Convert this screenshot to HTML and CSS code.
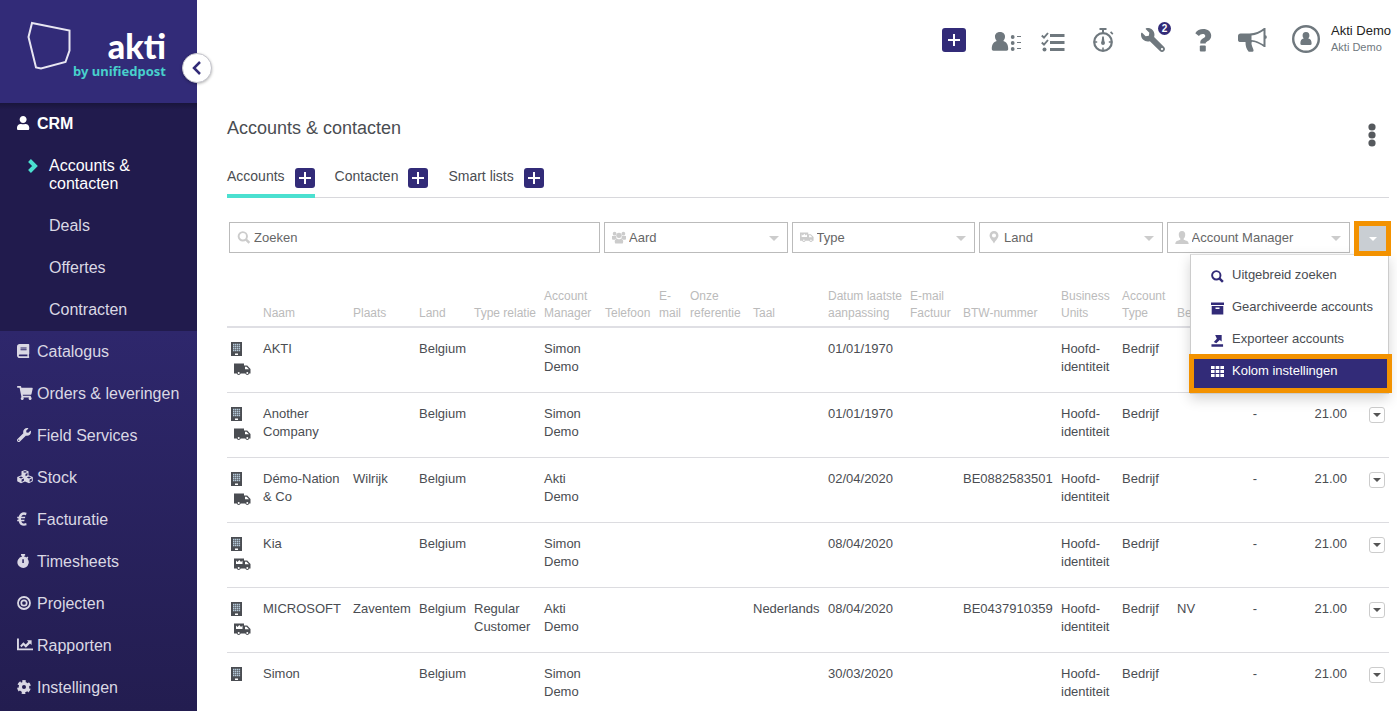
FILE: index.html
```html
<!DOCTYPE html>
<html lang="nl">
<head>
    <meta charset="UTF-8">
    <meta name="viewport" content="width=device-width, initial-scale=1.0">
    <title>Accounts &amp; contacten</title>
    <link rel="stylesheet" href="styles.css">
</head>
<body>

    <svg class="sprite" aria-hidden="true">
        <symbol id="i-user" viewBox="0 0 448 512" preserveAspectRatio="xMinYMid"><path d="M224 256c70.700 0 128-57.300 128-128S294.700 0 224 0 96 57.300 96 128s57.300 128 128 128zm89.600 32h-16.700c-22.200 10.200-46.900 16-72.900 16s-50.600-5.800-72.900-16h-16.700C60.200 288 0 348.200 0 422.400V464c0 26.500 21.500 48 48 48h352c26.500 0 48-21.500 48-48v-41.600c0-74.200-60.200-134.400-134.400-134.400z"/></symbol>
        <symbol id="i-book" viewBox="0 0 448 512" preserveAspectRatio="xMinYMid"><path d="M448 360V24c0-13.300-10.700-24-24-24H96C43 0 0 43 0 96v320c0 53 43 96 96 96h328c13.300 0 24-10.700 24-24v-16c0-7.500-3.500-14.300-8.900-18.700-4.200-15.400-4.200-59.300 0-74.700 5.400-4.300 8.900-11.100 8.900-18.600zM128 134c0-3.300 2.700-6 6-6h212c3.300 0 6 2.700 6 6v20c0 3.300-2.700 6-6 6H134c-3.300 0-6-2.700-6-6v-20zm0 64c0-3.300 2.700-6 6-6h212c3.300 0 6 2.700 6 6v20c0 3.300-2.700 6-6 6H134c-3.300 0-6-2.700-6-6v-20zm253.400 250H96c-17.700 0-32-14.300-32-32 0-17.600 14.400-32 32-32h285.400c-1.900 17.100-1.900 46.900 0 64z"/></symbol>
        <symbol id="i-cart" viewBox="0 0 576 512" preserveAspectRatio="xMinYMid"><path d="M528.120 301.319l47.273-208C578.806 78.301 567.391 64 551.990 64H159.208l-9.166-44.810C147.758 8.021 137.930 0 126.529 0H24C10.745 0 0 10.745 0 24v16c0 13.255 10.745 24 24 24h69.883l70.248 343.435C147.325 417.100 136 435.222 136 456c0 30.928 25.072 56 56 56s56-25.072 56-56c0-15.674-6.447-29.835-16.824-40h209.647C430.447 426.165 424 440.326 424 456c0 30.928 25.072 56 56 56s56-25.072 56-56c0-22.172-12.888-41.332-31.579-50.405l5.517-24.276c3.413-15.018-8.002-29.319-23.403-29.319H218.117l-6.545-32h293.145c11.206 0 20.920-7.754 23.403-18.681z"/></symbol>
        <symbol id="i-wrench" viewBox="0 0 512 512" preserveAspectRatio="xMinYMid"><path d="M507.730 109.100c-2.240-9.030-13.540-12.090-20.120-5.510l-74.360 74.360-67.880-11.310-11.310-67.880 74.360-74.360c6.620-6.620 3.430-17.900-5.660-20.160-47.380-11.740-99.550.910-136.580 37.930-39.640 39.640-50.550 97.100-34.050 147.200L18.740 402.760c-24.990 24.990-24.990 65.510 0 90.500 24.990 24.990 65.510 24.990 90.500 0l213.210-213.210c50.120 16.710 107.470 5.680 147.370-34.220 37.070-37.070 49.700-89.320 37.910-136.730zM64 472c-13.250 0-24-10.750-24-24 0-13.260 10.750-24 24-24s24 10.740 24 24c0 13.250-10.750 24-24 24z"/></symbol>
        <symbol id="i-cubes" viewBox="0 0 16 14" preserveAspectRatio="xMinYMid"><path fill-rule="evenodd" d="M8 0l3.500 1.300v4L15.800 7v4.300L12 13.300l-4-1.900-4 1.900-3.800-2V7l4.300-1.700v-4zM8 1L5.800 1.900 8 2.800l2.200-.9zM8.500 3.900v2.300l2-.9V3zM4 6.500l-2.200.9 2.200 1 2.200-1zM12 6.500l-2.200.9 2.200 1 2.200-1zM4.600 9.600v2.300l2.300-1.200V8.500zM12.600 9.600v2.300l2.200-1.200V8.500z"/></symbol>
        <symbol id="i-euro" viewBox="0 0 10 14" preserveAspectRatio="xMinYMid"><path d="M9.600.8L9 3.200C6.600 2 4.900 2.900 4.300 4.800h4l-.4 1.500H4v1.400h3.600l-.4 1.500H4.300c.6 2.200 2.500 2.900 4.900 1.900l.4 2.200C5.800 14.600 2.400 13.100 1.700 9.200H.2V7.700h1.200V6.300H.2V4.800h1.500C2.500 1.100 6-.8 9.600.8z"/></symbol>
        <symbol id="i-timer" viewBox="0 0 13 15" preserveAspectRatio="xMinYMid"><path fill-rule="evenodd" d="M4.300 0h4.400v1.800H7.600v1c.9.100 1.700.5 2.400 1l1-1 1.200 1.200-.9 1A6.100 6.100 0 1 1 5.400 2.800v-1H4.300zM5.700 5.500v4.200h1.600V5.500z"/></symbol>
        <symbol id="i-target" viewBox="0 0 14 14" preserveAspectRatio="xMinYMid"><circle cx="7" cy="7" r="6" fill="none" stroke="currentColor" stroke-width="1.800"/><circle cx="7" cy="7" r="2.700" fill="none" stroke="currentColor" stroke-width="1.700"/></symbol>
        <symbol id="i-chart" viewBox="0 0 15 12" preserveAspectRatio="xMinYMid"><path d="M0 0h1.800v9.200H15V11H0zM2.900 6.700L6 3.500l2.200 2 2.400-2.500L9.300 1.600h4.400V6l-1.500-1.400-3.900 3.900L6 6.300 4.200 8.200z"/></symbol>
        <symbol id="i-cog" viewBox="0 0 16 16" preserveAspectRatio="xMinYMid"><circle cx="8" cy="8" r="4.200" fill="none" stroke="currentColor" stroke-width="3.800"/><circle cx="8" cy="8" r="6.600" fill="none" stroke="currentColor" stroke-width="2.600" stroke-dasharray="3.900 3.010" transform="rotate(-107 8 8)"/></symbol>
        <symbol id="i-plus" viewBox="0 0 20 20"><path d="M9 4h2v5h5v2h-5v5H9v-5H4V9h5z"/></symbol>
        <symbol id="i-search" viewBox="0 0 14 14"><circle cx="5.700" cy="5.700" r="4.500" fill="none" stroke="currentColor" stroke-width="2.100"/><path d="M9 9l3.800 3.800" fill="none" stroke="currentColor" stroke-width="2.600"/></symbol>
        <symbol id="i-building" viewBox="0 0 11 14"><path fill-rule="evenodd" d="M0 0h11v14H0zM4 11.500V13h3v-1.500z"/><path d="M2 2.500h7.200M2 4.500h7.200M2 6.500h7.200M2 8.500h7.200" fill="none" stroke="#b4c8d8" stroke-width="1.400" stroke-dasharray="1.400 .5"/></symbol>
        <symbol id="i-truck" viewBox="0 0 17 13"><path fill-rule="evenodd" d="M0 .5h10v2h3.200L16.500 6v4.500h-1.200a2.100 2.100 0 0 1-4 0H6.700a2.100 2.100 0 0 1-4 0H0zM11 3.700v2.500h4l-2.400-2.500zM4.700 8.900a1 1 0 1 0 0 2 1 1 0 0 0 0-2zM13.300 8.900a1 1 0 1 0 0 2 1 1 0 0 0 0-2z"/></symbol>
        <symbol id="i-van" viewBox="0 0 17 13"><path fill-rule="evenodd" d="M0 .5h10v2h3.200L16.500 6v4.500h-1.200a2.100 2.100 0 0 1-4 0H6.700a2.100 2.100 0 0 1-4 0H0zM11 3.700v2.500h4l-2.400-2.500zM4.700 8.900a1 1 0 1 0 0 2 1 1 0 0 0 0-2zM13.300 8.900a1 1 0 1 0 0 2 1 1 0 0 0 0-2zM2 2.500V6h6.500V2.500L7 4 5.300 2 3.500 4z"/></symbol>
        <symbol id="i-group" viewBox="0 0 15 13"><circle cx="2.800" cy="2.400" r="2"/><circle cx="12.200" cy="2.400" r="2"/><circle cx="7.500" cy="4.200" r="2.900"/><path d="M0 5h4.200c.1 1.200.5 2 1.200 2.600-1.300.2-2 .8-2.400 1.400H1Q0 9 0 7.500zM15 5h-4.200c-.1 1.200-.5 2-1.200 2.600 1.300.2 2 .8 2.400 1.400h2q1 0 1-1.500zM3.500 13c-1.400-3 0-5 2-5.200q2 1.200 4 0c2 .2 3.400 2.200 2 5.200z"/></symbol>
        <symbol id="i-pin" viewBox="0 0 10 14"><path fill-rule="evenodd" d="M5 0a4.800 4.800 0 0 1 4.800 4.800C9.800 8 6.500 10 5 13.500 3.500 10 .2 8 .2 4.800A4.800 4.800 0 0 1 5 0zm0 2.600a2.200 2.200 0 1 0 0 4.400 2.200 2.200 0 0 0 0-4.400z"/></symbol>
        <symbol id="i-person" viewBox="0 0 14 13"><path d="M7 0c2.400 0 3.500 1.800 3.200 4.200C10 6 9.300 7 8.700 7.600v1.200c2.600.9 4.900 1.300 5 4.200H.3c.1-2.900 2.400-3.300 5-4.200V7.600C4.700 7 4 6 3.800 4.200 3.500 1.800 4.600 0 7 0z"/></symbol>
        <symbol id="i-archive" viewBox="0 0 13 12"><path fill-rule="evenodd" d="M0 0h13v2.500H0zM.7 3.500h11.600V12H.7zM4.500 5v1.500h4V5z"/></symbol>
        <symbol id="i-export" viewBox="0 0 13 14"><path d="M0 11h12.500v2.800H0zM4 1h7v7L8.900 6.400 5.200 10 2.500 8.700l3.300-3.500z"/></symbol>
        <symbol id="i-grid" viewBox="0 0 13 13"><path d="M0 1h3.600v3H0zM4.700 1h3.600v3H4.700zM9.400 1H13v3H9.400zM0 5h3.600v3H0zM4.700 5h3.600v3H4.700zM9.400 5H13v3H9.400zM0 9h3.600v3H0zM4.700 9h3.600v3H4.700zM9.400 9H13v3H9.400z"/></symbol>
    </svg>

    <aside class="sidebar">
        <div class="logo">
            <svg class="logo-mark" viewBox="0 0 46 50"><path d="M5 2l37.500 7.500v20L38.500 41 14 47.500 9 46.500 1.500 16z" fill="none" stroke="#e8e6f2" stroke-width="2"/></svg>
            <div class="logo-text">
                <span class="logo-name">akti</span>
                <span class="logo-by">by unifiedpost</span>
            </div>
            <button class="collapse" aria-label="Menu inklappen"><svg viewBox="0 0 10 14"><path d="M8 1L2 7l6 6" fill="none" stroke="#322b78" stroke-width="2.500"/></svg></button>
        </div>
        <nav>
            <div class="nav-open">
                <a class="nav-item current" href="#"><svg class="nav-icon"><use href="#i-user"/></svg>CRM</a>
                <a class="sub-item current" href="#"><svg class="chevron" viewBox="0 0 10 14"><path d="M1.500 1.500L7 7l-5.500 5.500" fill="none" stroke="#4be0d0" stroke-width="4"/></svg>Accounts &amp; contacten</a>
                <a class="sub-item" href="#">Deals</a>
                <a class="sub-item" href="#">Offertes</a>
                <a class="sub-item" href="#">Contracten</a>
            </div>
            <a class="nav-item" href="#"><svg class="nav-icon"><use href="#i-book"/></svg>Catalogus</a>
            <a class="nav-item" href="#"><svg class="nav-icon"><use href="#i-cart"/></svg>Orders &amp; leveringen</a>
            <a class="nav-item" href="#"><svg class="nav-icon"><use href="#i-wrench"/></svg>Field Services</a>
            <a class="nav-item" href="#"><svg class="nav-icon"><use href="#i-cubes"/></svg>Stock</a>
            <a class="nav-item" href="#"><svg class="nav-icon"><use href="#i-euro"/></svg>Facturatie</a>
            <a class="nav-item" href="#"><svg class="nav-icon"><use href="#i-timer"/></svg>Timesheets</a>
            <a class="nav-item" href="#"><svg class="nav-icon"><use href="#i-target"/></svg>Projecten</a>
            <a class="nav-item" href="#"><svg class="nav-icon"><use href="#i-chart"/></svg>Rapporten</a>
            <a class="nav-item" href="#"><svg class="nav-icon"><use href="#i-cog"/></svg>Instellingen</a>
        </nav>
    </aside>

    <main class="main">
        <header class="topbar">
            <button class="plus plus-large" aria-label="Toevoegen"><svg><use href="#i-plus"/></svg></button>
            <div class="tools">
                <button class="tool" aria-label="Contacten"><svg class="contacts" viewBox="-8 0 40 24"><path d="M9 4c3.400 0 5.200 2.200 5 4.800 0 1.700-.8 2.900-1.700 4.200 3.200.8 5 3.700 4.900 8 0 1.200-.6 1.700-1.700 1.700H2.500c-1.100 0-1.700-.5-1.700-1.700-.1-4.300 1.700-7.200 4.900-8C4.800 11.700 4 10.500 4 8.800 3.800 6.200 5.600 4 9 4z"/><circle cx="21.700" cy="9" r="1.900"/><circle cx="21.700" cy="15" r="1.900"/><circle cx="21.700" cy="21" r="1.900"/><path d="M26 8.500h4M26 14.500h4M26 20.500h4" fill="none" stroke="currentColor" stroke-width="1.200"/></svg></button>
                <button class="tool" aria-label="Taken"><svg viewBox="0 0 24 24"><path d="M9 6h14.500v3H9zM9 13h14.500v3H9zM9 20h14.500v3H9z"/><circle cx="3.500" cy="21.500" r="2"/><path d="M.8 7.500L3 9.700 7 5M.8 14.500L3 16.700 7 12" fill="none" stroke="currentColor" stroke-width="1.900"/></svg></button>
                <button class="tool" aria-label="Timer"><svg viewBox="0 0 24 24"><circle cx="12" cy="14" r="8.800" fill="none" stroke="currentColor" stroke-width="2.200"/><path d="M8.500 0h7v2H13v4h-2V2H8.500zM19 4.500l1.200-1.200 2.200 2.200-1.200 1.200zM11.200 8.500h1.600l.8 7h-3.200z"/><circle cx="12" cy="15" r="1.900"/><path d="M12 19.500V22M4 14h2.200M17.800 14H20" fill="none" stroke="currentColor" stroke-width="1.500"/></svg></button>
                <button class="tool" aria-label="Instellingen"><svg class="flip"><use href="#i-wrench"/></svg><span class="badge">2</span></button>
                <button class="tool" aria-label="Help"><svg viewBox="0 0 24 24"><path d="M4.300 5.200C6 2.300 8.800 1 12.100 1c4.600 0 8.100 2.600 8.100 6.700 0 5.300-5.500 5.500-5.500 7.300v.5H9.300v-1.200c0-4 5-4 5-6.300 0-1.500-1.200-2.100-2.600-2.100-1.600 0-2.800.9-3.800 2.100z"/><rect x="8.800" y="17.500" width="6" height="6" rx="1"/></svg></button>
                <button class="tool" aria-label="Nieuws"><svg class="wide" viewBox="0 0 32 24"><path fill-rule="evenodd" d="M3.500 5.500h9C18 5.500 23 3 27 0h1.500v7.200c1.600 0 1.900 3.600 0 3.600V19H27c-3.500-2.800-8-5-12-5.200-1.500 2.200.8 5.300 1.500 8.200.2.800-.2 1.700-1 1.700h-3.800C9.200 21 8.500 18 8.500 14h-5C2 14 1 13.500 1 12V8c0-1.500 1-2.500 2.500-2.500zM14.500 7.500v4.400c4.200.3 8.200 2.100 12 4.700V2.800c-3.800 2.600-7.800 4.300-12 4.700z"/></svg></button>
            </div>
            <a class="account" href="#">
                <svg viewBox="0 0 28 28"><circle cx="14" cy="14" r="12.800" fill="none" stroke="currentColor" stroke-width="2.400"/><path d="M14 7c2.500 0 3.500 1.700 3.400 3.500 0 1.300-.5 2.100-1.100 2.900 2.200.5 3.500 2 3.300 5.400 0 .8-.4 1.100-1.200 1.100H9.600c-.8 0-1.200-.3-1.200-1.100-.2-3.400 1.100-4.900 3.300-5.400-.6-.8-1.100-1.600-1.100-2.900C10.500 8.700 11.500 7 14 7z"/></svg>
                <span class="account-text"><span class="account-name">Akti Demo</span><span class="account-company">Akti Demo</span></span>
            </a>
        </header>

        <div class="title-row">
            <h1>Accounts &amp; contacten</h1>
            <button class="more" aria-label="Meer"><svg viewBox="0 0 8 24"><circle cx="4" cy="4" r="3.600"/><circle cx="4" cy="12" r="3.600"/><circle cx="4" cy="20" r="3.600"/></svg></button>
        </div>

        <div class="tabs">
            <div class="tab active"><a href="#">Accounts</a><button class="plus" aria-label="Nieuw account"><svg><use href="#i-plus"/></svg></button></div>
            <div class="tab"><a href="#">Contacten</a><button class="plus" aria-label="Nieuw contact"><svg><use href="#i-plus"/></svg></button></div>
            <div class="tab"><a href="#">Smart lists</a><button class="plus" aria-label="Nieuwe lijst"><svg><use href="#i-plus"/></svg></button></div>
        </div>

        <form class="filters">
            <div class="field field-search"><svg class="field-icon"><use href="#i-search"/></svg><input type="text" placeholder="Zoeken" aria-label="Zoeken"></div>
            <div class="field select"><svg class="field-icon"><use href="#i-group"/></svg><select aria-label="Aard"><option>Aard</option></select></div>
            <div class="field select"><svg class="field-icon"><use href="#i-van"/></svg><select aria-label="Type"><option>Type</option></select></div>
            <div class="field select"><svg class="field-icon"><use href="#i-pin"/></svg><select aria-label="Land"><option>Land</option></select></div>
            <div class="field select"><svg class="field-icon"><use href="#i-person"/></svg><select aria-label="Account Manager"><option>Account Manager</option></select></div>
            <div class="options">
                <button type="button" class="options-button" aria-label="Opties"></button>
                <ul class="menu">
                    <li><a href="#"><svg><use href="#i-search"/></svg>Uitgebreid zoeken</a></li>
                    <li><a href="#"><svg><use href="#i-archive"/></svg>Gearchiveerde accounts</a></li>
                    <li><a href="#"><svg><use href="#i-export"/></svg>Exporteer accounts</a></li>
                    <li><a class="selected" href="#"><svg><use href="#i-grid"/></svg>Kolom instellingen</a></li>
                </ul>
            </div>
        </form>

        <table class="accounts">
            <colgroup>
                <col class="w32"><col class="w90"><col class="w66"><col class="w55"><col class="w70"><col class="w61"><col class="w54"><col class="w31"><col class="w63"><col class="w75"><col class="w82"><col class="w53"><col class="w98"><col class="w61"><col class="w55"><col class="w50"><col class="w38"><col class="w90"><col class="w38">
            </colgroup>
            <thead>
                <tr>
                    <th></th><th>Naam</th><th>Plaats</th><th>Land</th><th>Type relatie</th><th>Account<br>Manager</th><th>Telefoon</th><th>E-<br>mail</th><th>Onze<br>referentie</th><th>Taal</th><th>Datum laatste<br>aanpassing</th><th>E-mail<br>Factuur</th><th>BTW-nummer</th><th>Business<br>Units</th><th>Account<br>Type</th><th>Bedrijf</th><th></th><th></th><th></th>
                </tr>
            </thead>
            <tbody>
                <tr>
                    <td><svg class="building"><use href="#i-building"/></svg><svg class="truck"><use href="#i-truck"/></svg></td>
                    <td>AKTI</td><td></td><td>Belgium</td><td></td><td>Simon<br>Demo</td><td></td><td></td><td></td><td></td><td>01/01/1970</td><td></td><td></td><td>Hoofd-<br>identiteit</td><td>Bedrijf</td><td></td><td></td><td></td><td></td>
                </tr>
                <tr>
                    <td><svg class="building"><use href="#i-building"/></svg><svg class="truck"><use href="#i-truck"/></svg></td>
                    <td>Another<br>Company</td><td></td><td>Belgium</td><td></td><td>Simon<br>Demo</td><td></td><td></td><td></td><td></td><td>01/01/1970</td><td></td><td></td><td>Hoofd-<br>identiteit</td><td>Bedrijf</td><td></td><td class="number">-</td><td class="number">21.00</td>
                    <td><button class="row-menu" aria-label="Acties"></button></td>
                </tr>
                <tr>
                    <td><svg class="building"><use href="#i-building"/></svg><svg class="truck"><use href="#i-truck"/></svg></td>
                    <td>Démo-Nation<br>&amp; Co</td><td>Wilrijk</td><td>Belgium</td><td></td><td>Akti<br>Demo</td><td></td><td></td><td></td><td></td><td>02/04/2020</td><td></td><td>BE0882583501</td><td>Hoofd-<br>identiteit</td><td>Bedrijf</td><td></td><td class="number">-</td><td class="number">21.00</td>
                    <td><button class="row-menu" aria-label="Acties"></button></td>
                </tr>
                <tr>
                    <td><svg class="building"><use href="#i-building"/></svg><svg class="truck"><use href="#i-van"/></svg></td>
                    <td>Kia</td><td></td><td>Belgium</td><td></td><td>Simon<br>Demo</td><td></td><td></td><td></td><td></td><td>08/04/2020</td><td></td><td></td><td>Hoofd-<br>identiteit</td><td>Bedrijf</td><td></td><td class="number">-</td><td class="number">21.00</td>
                    <td><button class="row-menu" aria-label="Acties"></button></td>
                </tr>
                <tr>
                    <td><svg class="building"><use href="#i-building"/></svg><svg class="truck"><use href="#i-van"/></svg></td>
                    <td>MICROSOFT</td><td>Zaventem</td><td>Belgium</td><td>Regular<br>Customer</td><td>Akti<br>Demo</td><td></td><td></td><td></td><td>Nederlands</td><td>08/04/2020</td><td></td><td>BE0437910359</td><td>Hoofd-<br>identiteit</td><td>Bedrijf</td><td>NV</td><td class="number">-</td><td class="number">21.00</td>
                    <td><button class="row-menu" aria-label="Acties"></button></td>
                </tr>
                <tr>
                    <td><svg class="building"><use href="#i-building"/></svg></td>
                    <td>Simon</td><td></td><td>Belgium</td><td></td><td>Simon<br>Demo</td><td></td><td></td><td></td><td></td><td>30/03/2020</td><td></td><td></td><td>Hoofd-<br>identiteit</td><td>Bedrijf</td><td></td><td class="number">-</td><td class="number">21.00</td>
                    <td><button class="row-menu" aria-label="Acties"></button></td>
                </tr>
            </tbody>
        </table>
    </main>

</body>
</html>
```
FILE: styles.css
```css
:root {
    --purple: #322b78;
    --purple-dark: #211b4d;
    --teal: #4be0d0;
    --orange: #f39200;
    --grey-icon: #6f787e;
    --text: #4a4d52;
}

* {
    margin: 0;
    padding: 0;
    box-sizing: border-box;
}

body {
    display: flex;
    height: 100vh;
    overflow: hidden;
    background: #fff;
    color: var(--text);
    font-family: "Liberation Sans", Arial, sans-serif;
    font-size: 13px;
    line-height: 18px;
}

a {
    color: inherit;
    text-decoration: none;
}

button {
    border: none;
    background: none;
    color: inherit;
    cursor: pointer;
}

svg {
    display: block;
    fill: currentColor;
}

.sprite {
    position: absolute;
    width: 0;
    height: 0;
}

/* sidebar */
.sidebar {
    flex: none;
    width: 197px;
    height: 100vh;
    background: linear-gradient(#322b78 103px, #2e276c 330px, #231d50);
    color: #dad8e4;
    font-size: 16px;
}

.logo {
    position: relative;
    display: flex;
    height: 103px;
    padding: 21px 31px 0 27px;
    background: var(--purple);
}

.logo-mark {
    flex: none;
    width: 46px;
    height: 50px;
}

.logo-text {
    flex: 1;
    display: flex;
    flex-direction: column;
    align-items: flex-end;
    padding-top: 8px;
    white-space: nowrap;
}

.logo-name {
    color: #fff;
    font: 900 34px/34px Lato, sans-serif;
}

.logo-by {
    color: #48d0cc;
    font: 700 13px/16px "Noto Sans", sans-serif;
}

.collapse {
    position: absolute;
    top: 53px;
    right: -15px;
    display: flex;
    align-items: center;
    justify-content: center;
    width: 30px;
    height: 30px;
    border: 1px solid #c4c4cc;
    border-radius: 50%;
    background: #fff;
    box-shadow: 0 1px 3px rgba(0, 0, 0, 0.3);
}

.collapse svg {
    width: 10px;
    height: 14px;
}

.nav-open {
    background: linear-gradient(#19153b, var(--purple-dark) 7px);
}

.nav-item {
    display: flex;
    align-items: center;
    gap: 4px;
    height: 42px;
    padding-left: 17px;
    white-space: nowrap;
}

.nav-icon {
    width: 16px;
    height: 14px;
    margin-bottom: 3px;
}

.sub-item {
    position: relative;
    display: block;
    padding: 12px 40px 12px 49px;
}

.current {
    color: #fff;
}

.nav-item.current {
    font-weight: bold;
}

.chevron {
    position: absolute;
    top: 14px;
    left: 28px;
    width: 10px;
    height: 14px;
}

/* main */
.main {
    flex: 1;
    min-width: 0;
    padding: 0 8px 0 30px;
}

.topbar {
    display: flex;
    align-items: center;
    justify-content: flex-end;
    height: 80px;
    margin-right: -2px;
    color: var(--grey-icon);
}

.tools {
    display: flex;
    padding: 0 14px 0 12px;
}

.tool {
    position: relative;
    display: flex;
    align-items: center;
    justify-content: center;
    width: 50px;
    height: 40px;
}

.tool svg {
    flex: none;
    width: 24px;
    height: 24px;
}

.tool .wide {
    width: 32px;
}

.tool .contacts {
    width: 40px;
}

.tool .flip {
    transform: scaleX(-1);
}

.badge {
    position: absolute;
    top: 2px;
    right: 7px;
    width: 13px;
    height: 13px;
    border-radius: 50%;
    background: var(--purple);
    color: #fff;
    font: bold 10px/13px "Liberation Sans", Arial, sans-serif;
    text-align: center;
}

.account {
    display: flex;
    align-items: center;
    gap: 11px;
    padding-bottom: 2px;
}

.account svg {
    width: 28px;
    height: 28px;
}

.account-text {
    display: flex;
    flex-direction: column;
    padding-bottom: 2px;
}

.account-name {
    color: #222;
    line-height: 17px;
}

.account-company {
    font-size: 11px;
    line-height: 16px;
}

.plus {
    flex: none;
    width: 20px;
    height: 20px;
    border-radius: 3px;
    background: var(--purple);
    color: #fff;
}

.plus svg {
    width: 100%;
    height: 100%;
}

.plus-large {
    width: 24px;
    height: 24px;
    padding: 2px;
}

.title-row {
    display: flex;
    justify-content: space-between;
    padding-top: 37px;
}

h1 {
    font-size: 18px;
    font-weight: normal;
    line-height: 22px;
}

.more {
    height: 24px;
    margin: 6px 13px 0 0;
    color: #55595d;
}

.more svg {
    width: 8px;
    height: 24px;
}

.tabs {
    display: flex;
    gap: 20px;
    height: 31px;
    margin-top: 20px;
    border-bottom: 1px solid #d8d8dc;
    font-size: 14px;
    line-height: 16px;
}

.tab {
    display: flex;
    gap: 10px;
    height: 31px;
    align-items: flex-start;
    padding-top: 1px;
}

.tab.active {
    border-bottom: 4px solid var(--teal);
}

/* filters */
.filters {
    display: flex;
    gap: 4px;
    margin: 24px -2px 0 2px;
}

.field {
    position: relative;
    flex: 1 1 0;
    height: 31px;
    border: 1px solid #bbb;
}

.field-search {
    flex-grow: 2;
    flex-basis: 8px;
}

.field-icon {
    position: absolute;
    top: 8px;
    left: 7px;
    width: 14px;
    height: 13px;
    color: #ccc;
}

.field input,
.field select {
    display: block;
    width: 100%;
    height: 29px;
    padding: 0 24px;
    border: none;
    background: none;
    color: #666;
    font: inherit;
    appearance: none;
}

.field input::placeholder {
    color: #666;
}

.select::after {
    content: "";
    position: absolute;
    top: 13px;
    right: 8px;
    border: 5px solid transparent;
    border-top-color: #ccc;
    border-bottom: none;
    pointer-events: none;
}

.options {
    position: relative;
    height: 31px;
}

/* stays above the menu that hangs under it */
.options-button {
    position: relative;
    z-index: 3;
    display: flex;
    align-items: center;
    justify-content: center;
    width: 37px;
    height: 35px;
    margin-top: -1px;
    border: 5px solid var(--orange);
    background: #c9ced3;
}

.options-button::after {
    content: "";
    border: 4px solid transparent;
    border-top-color: #fff;
    border-bottom: none;
}

.menu {
    position: absolute;
    z-index: 2;
    top: 32px;
    right: 2px;
    width: 199px;
    padding-top: 4px;
    border: 1px solid #ccc;
    border-top-color: #ddd;
    background: #fff;
    box-shadow: 0 5px 12px rgba(0, 0, 0, 0.17);
    list-style: none;
}

.menu a {
    display: flex;
    align-items: center;
    gap: 8px;
    height: 32px;
    padding-left: 20px;
}

.menu svg {
    width: 13px;
    height: 13px;
    margin-top: 2px;
    color: var(--purple);
}

.menu .selected {
    height: 39px;
    margin: -1px -4px 0 -2px;
    padding: 0 0 6px 17px;
    border: 5px solid var(--orange);
    background: var(--purple);
    color: #fff;
}

.menu .selected svg {
    color: #fff;
}

/* accounts table */
.accounts {
    width: 100%;
    margin-top: 35px;
    table-layout: fixed;
    border-collapse: separate;
    border-spacing: 0;
}

th {
    padding: 0 4px 4px;
    border-bottom: 2px solid #dfdfe4;
    color: #bbb;
    font-size: 12px;
    font-weight: normal;
    line-height: 17px;
    text-align: left;
    vertical-align: bottom;
    white-space: nowrap;
}

td {
    height: 65px;
    padding: 12px 4px 0;
    border-bottom: 1px solid #dcdce0;
    vertical-align: top;
    white-space: nowrap;
}

.number {
    text-align: right;
}

.building {
    width: 11px;
    height: 14px;
    margin-top: 2px;
}

.truck {
    width: 17px;
    height: 13px;
    margin: 7px 0 0 3px;
}

.row-menu {
    display: flex;
    align-items: center;
    justify-content: center;
    width: 16px;
    height: 16px;
    margin: 2px 0 0 14px;
    border: 1px solid #ccc;
    border-radius: 3px;
}

.row-menu::after {
    content: "";
    border: 4px solid transparent;
    border-top-color: #555;
    border-bottom: none;
}

.w31 { width: 31px; }
.w32 { width: 32px; }
.w38 { width: 38px; }
.w50 { width: 50px; }
.w53 { width: 53px; }
.w54 { width: 54px; }
.w55 { width: 55px; }
.w61 { width: 61px; }
.w63 { width: 63px; }
.w66 { width: 66px; }
.w70 { width: 70px; }
.w75 { width: 75px; }
.w82 { width: 82px; }
.w90 { width: 90px; }
.w98 { width: 98px; }
```
